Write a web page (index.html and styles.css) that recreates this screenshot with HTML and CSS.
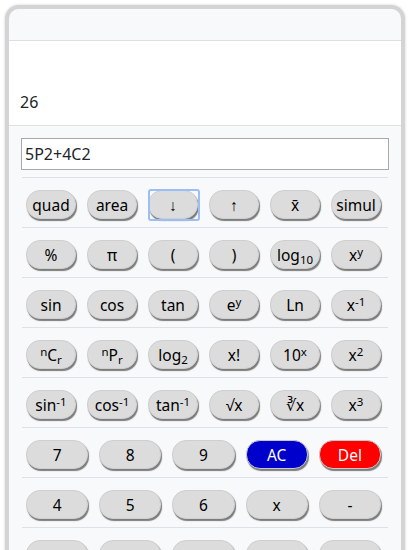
FILE: index.html
```html
<!DOCTYPE html>
<html>
<head>
<meta charset="utf-8">
<link rel="stylesheet" href="styles.css">
</head>
<body>
<div class="calc">
  <div class="head"></div>
  <div class="screen"><span class="result">26</span></div>
  <div class="pad">
    <input class="expr" type="text" value="5P2+4C2" readonly>
    <div class="row six">
      <div class="cell"><button class="key">quad</button></div>
      <div class="cell"><button class="key">area</button></div>
      <div class="cell"><button class="key focus">↓</button></div>
      <div class="cell"><button class="key">↑</button></div>
      <div class="cell"><button class="key">x̄</button></div>
      <div class="cell"><button class="key">simul</button></div>
    </div>
    <div class="row six">
      <div class="cell"><button class="key">%</button></div>
      <div class="cell"><button class="key">π</button></div>
      <div class="cell"><button class="key">(</button></div>
      <div class="cell"><button class="key">)</button></div>
      <div class="cell"><button class="key">log<sub>10</sub></button></div>
      <div class="cell"><button class="key">x<sup>y</sup></button></div>
    </div>
    <div class="row six">
      <div class="cell"><button class="key">sin</button></div>
      <div class="cell"><button class="key">cos</button></div>
      <div class="cell"><button class="key">tan</button></div>
      <div class="cell"><button class="key">e<sup>y</sup></button></div>
      <div class="cell"><button class="key">Ln</button></div>
      <div class="cell"><button class="key">x<sup>-1</sup></button></div>
    </div>
    <div class="row six">
      <div class="cell"><button class="key"><sup>n</sup>C<sub>r</sub></button></div>
      <div class="cell"><button class="key"><sup>n</sup>P<sub>r</sub></button></div>
      <div class="cell"><button class="key">log<sub>2</sub></button></div>
      <div class="cell"><button class="key">x!</button></div>
      <div class="cell"><button class="key">10<sup>x</sup></button></div>
      <div class="cell"><button class="key">x<sup>2</sup></button></div>
    </div>
    <div class="row six">
      <div class="cell"><button class="key">sin<sup>-1</sup></button></div>
      <div class="cell"><button class="key">cos<sup>-1</sup></button></div>
      <div class="cell"><button class="key">tan<sup>-1</sup></button></div>
      <div class="cell"><button class="key">√x</button></div>
      <div class="cell"><button class="key">∛x</button></div>
      <div class="cell"><button class="key">x<sup>3</sup></button></div>
    </div>
    <div class="row five">
      <div class="cell"><button class="key">7</button></div>
      <div class="cell"><button class="key">8</button></div>
      <div class="cell"><button class="key">9</button></div>
      <div class="cell"><button class="key ac">AC</button></div>
      <div class="cell"><button class="key del">Del</button></div>
    </div>
    <div class="row five">
      <div class="cell"><button class="key">4</button></div>
      <div class="cell"><button class="key">5</button></div>
      <div class="cell"><button class="key">6</button></div>
      <div class="cell"><button class="key">x</button></div>
      <div class="cell"><button class="key">-</button></div>
    </div>
    <div class="row five">
      <div class="cell"><button class="key"></button></div>
      <div class="cell"><button class="key"></button></div>
      <div class="cell"><button class="key"></button></div>
      <div class="cell"><button class="key"></button></div>
      <div class="cell"><button class="key"></button></div>
    </div>
  </div>
</div>
</body>
</html>
```
FILE: styles.css
```css
* { box-sizing: border-box; }
html, body { margin: 0; padding: 0; background: #ffffff; overflow: hidden; }
body { font-family: "Noto Sans", "Open Sans", sans-serif; color: #212529; }

.calc {
  margin: 5px 0 0 5px;
  width: 400px;
  height: 600px;
  border: 4px solid #d4d4d4;
  border-radius: 14px;
  background: #f8f9fa;
  box-shadow: 0 0 3px rgba(0,0,0,0.18);
  overflow: hidden;
}

.head {
  height: 32px;
  background: #f8f9fa;
  border-bottom: 1px solid #dcdfe3;
  box-shadow: 0 1px 1px rgba(0,0,0,0.06);
}

.screen {
  height: 85px;
  background: #ffffff;
  border-bottom: 1px solid #dee2e6;
  display: flex;
  align-items: flex-end;
  padding: 0 0 12px 11px;
  font-size: 16px;
  color: #212529;
}

.pad {
  padding: 12px 13px 0 13px;
}

.expr {
  display: block;
  width: calc(100% + 2px);
  margin: 0 -1px;
  height: 32px;
  border: 1px solid #a9a9a9;
  background: #ffffff;
  padding: 0 3px;
  font-family: "Noto Sans", "Open Sans", sans-serif;
  font-size: 16px;
  color: #212529;
  outline: none;
}

.row {
  display: grid;
  margin-top: 7px;
  border-top: 1px solid #dee2e6;
  padding: 12px 0 8px 0;
}
.row + .row { margin-top: 0; }
.six { grid-template-columns: repeat(6, 1fr); }
.five { grid-template-columns: repeat(5, 1fr); }

.cell { padding: 0 7px 0 4px; }

.key {
  position: relative;
  display: block;
  width: 100%;
  height: 29px;
  padding: 2px 0 0 0;
  border: 1px solid #cfcfcf;
  border-radius: 14px;
  background: #dcdcdc;
  box-shadow: 1px 2px 1px #7c7c7c;
  font-family: "Noto Sans", "Open Sans", sans-serif;
  font-size: 15.5px;
  color: #000;
  line-height: 23px;
  white-space: nowrap;
}
.key sup, .key sub { font-size: 11.5px; line-height: 0; }
.key sup { vertical-align: 5px; }
.key sub { vertical-align: -3px; }

.focus::after {
  content: "";
  position: absolute;
  top: -2px;
  left: -1px;
  right: -3px;
  bottom: -3px;
  border: 2px solid #9dbdf6;
  border-radius: 3px;
}

.ac { background: #0000cd; color: #ffffff; border-color: #c8c8c8; }
.del { background: #ff0000; color: #ffffff; border-color: #c8c8c8; }
```
